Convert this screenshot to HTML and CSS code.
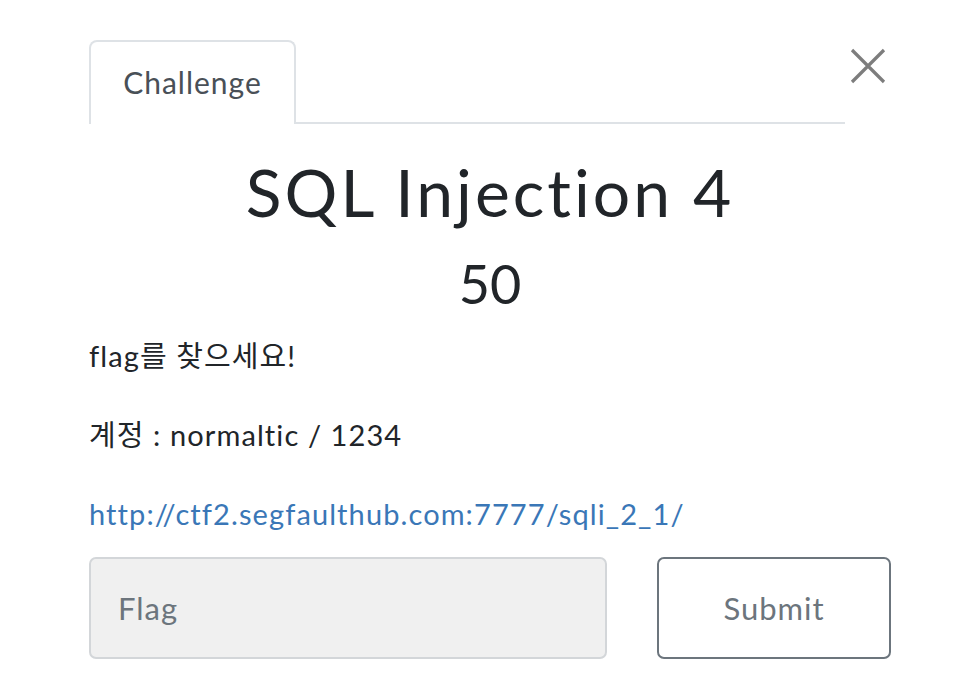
FILE: index.html
```html
<!DOCTYPE html>
<html lang="ko">
<head>
<meta charset="utf-8">
<title>Challenge</title>
<link rel="stylesheet" href="styles.css">
</head>
<body>
<div class="modal">
  <button class="close" aria-label="Close">
    <svg width="36" height="36" viewBox="0 0 36 36"><path d="M2 2 L34 34 M34 2 L2 34" stroke="#7d7d7d" stroke-width="3.2" fill="none"/></svg>
  </button>
  <div class="tabs">
    <div class="tab">Challenge</div>
  </div>
  <h2 class="title">SQL Injection 4</h2>
  <h3 class="value">50</h3>
  <div class="desc">
    <p>flag를 찾으세요!</p>
    <p>계정 : normaltic / 1234</p>
    <p><a href="#">http://ctf2.segfaulthub.com:7777/sqli_2_1/</a></p>
  </div>
  <div class="form">
    <input class="flag" type="text" placeholder="Flag">
    <button class="submit">Submit</button>
  </div>
</div>
</body>
</html>
```
FILE: styles.css
```css
html, body {
  margin: 0;
  padding: 0;
  background: #ffffff;
}
body {
  font-family: Lato, "Noto Sans CJK KR", sans-serif;
  color: #212529;
}
.modal {
  position: relative;
  width: 802px;
  padding: 40px 0 0 89px;
}
.close {
  position: absolute;
  left: 850px;
  top: 48px;
  width: 36px;
  height: 36px;
  padding: 0;
  border: none;
  background: transparent;
}
.close svg { display: block; }
.tabs {
  display: flex;
  width: 756px;
  border-bottom: 2px solid #dee2e6;
}
.tab {
  box-sizing: border-box;
  width: 207px;
  height: 84px;
  margin-bottom: -2px;
  border: 2px solid #dee2e6;
  border-bottom: none;
  border-radius: 8px 8px 0 0;
  background: #fff;
  color: #495057;
  font-size: 30px;
  letter-spacing: 1px;
  line-height: 80px;
  text-align: center;
}
.title {
  margin: 28px 0 0;
  font-size: 66px;
  font-weight: 400;
  line-height: 79px;
  letter-spacing: 3px;
  text-align: center;
}
.value {
  margin: 20px 0 0;
  font-size: 54px;
  font-weight: 400;
  line-height: 65px;
  text-align: center;
}
.desc {
  margin-top: 19px;
  font-size: 29px;
  line-height: 42px;
  letter-spacing: 1.1px;
}
.desc p {
  margin: 0 0 37px;
}
.desc p:last-child { margin-bottom: 0; }
.desc a {
  color: #3a77b7;
  text-decoration: none;
}
.form {
  display: flex;
  gap: 50px;
  margin-top: 22px;
}
.flag {
  box-sizing: border-box;
  width: 518px;
  height: 102px;
  padding: 0 27px;
  border: 2px solid #d3d6d9;
  border-radius: 7px;
  background: #f0f0f0;
  font-family: Lato, sans-serif;
  font-size: 31px;
  letter-spacing: 1px;
  color: #495057;
  outline: none;
}
.flag::placeholder { color: #6c757d; }
.submit {
  box-sizing: border-box;
  width: 234px;
  height: 102px;
  border: 2px solid #6c757d;
  border-radius: 7px;
  background: #fff;
  color: #6c757d;
  font-family: Lato, sans-serif;
  font-size: 31px;
  letter-spacing: 1px;
}
```
